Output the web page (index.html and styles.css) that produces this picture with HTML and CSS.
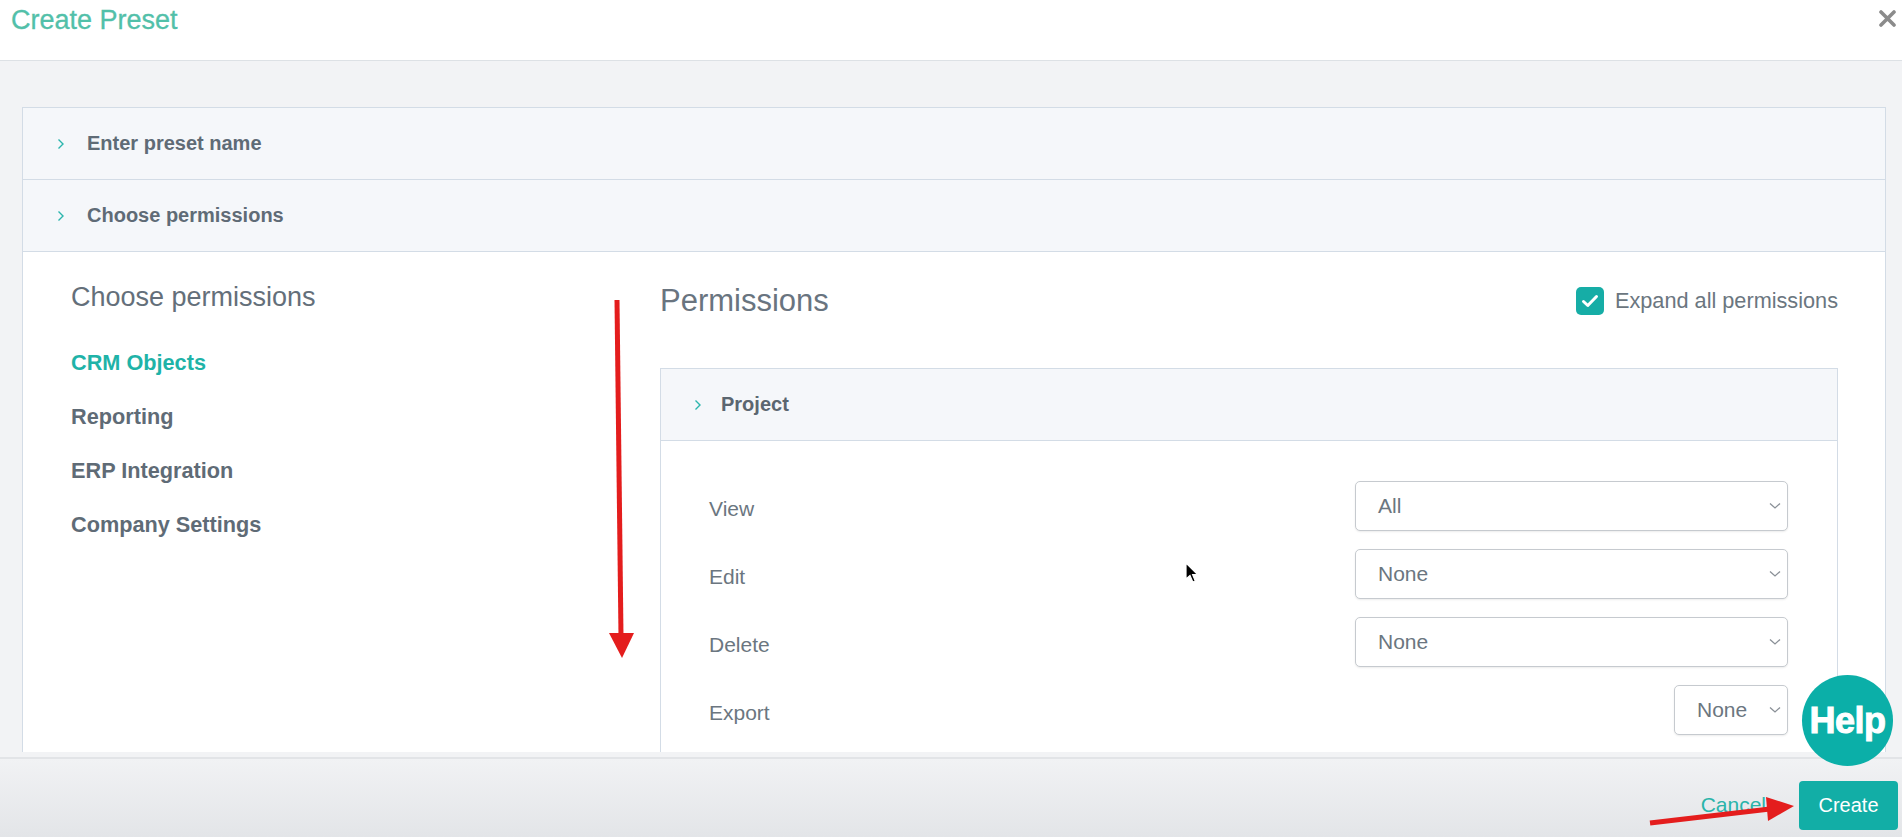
FILE: index.html
```html
<!DOCTYPE html>
<html>
<head>
  <title>Create Preset</title>
  <link rel="stylesheet" href="styles.css">
</head>
<body>
  <div class="modal">
    <header class="modal-header">
      <h1 class="modal-title">Create Preset</h1>
      <button class="close-btn" aria-label="Close">
        <svg width="17" height="17" viewBox="0 0 17 17"><path d="M2 2L15 15M15 2L2 15" stroke="#8b8b8b" stroke-width="3.6" stroke-linecap="round"/></svg>
      </button>
    </header>

    <main class="modal-body">
      <div class="scroll-area">
        <div class="wizard-card">
          <div class="step-header">
            <svg class="chev" width="8" height="12" viewBox="0 0 8 12"><path d="M1.5 1.5L6 6L1.5 10.5" fill="none" stroke="#2bb5ad" stroke-width="1.4"/></svg>
            <span>Enter preset name</span>
          </div>
          <div class="step-header">
            <svg class="chev" width="8" height="12" viewBox="0 0 8 12"><path d="M1.5 1.5L6 6L1.5 10.5" fill="none" stroke="#2bb5ad" stroke-width="1.4"/></svg>
            <span>Choose permissions</span>
          </div>

          <div class="perm-layout">
            <aside class="perm-nav">
              <h3>Choose permissions</h3>
              <ul>
                <li class="active">CRM Objects</li>
                <li>Reporting</li>
                <li>ERP Integration</li>
                <li>Company Settings</li>
              </ul>
            </aside>

            <section class="perm-main">
              <div class="perm-top">
                <h2>Permissions</h2>
                <label class="expand-all">
                  <span class="checkbox">
                    <svg width="18" height="14" viewBox="0 0 18 14"><path d="M2.5 7.5L6.8 11.5L15.5 2.5" fill="none" stroke="#fff" stroke-width="3" stroke-linecap="round" stroke-linejoin="round"/></svg>
                  </span>
                  Expand all permissions
                </label>
              </div>

              <div class="perm-panel">
                <div class="panel-header">
                  <svg class="chev" width="8" height="12" viewBox="0 0 8 12"><path d="M1.5 1.5L6 6L1.5 10.5" fill="none" stroke="#2bb5ad" stroke-width="1.4"/></svg>
                  <span>Project</span>
                </div>
                <div class="panel-body">
                  <div class="perm-row">
                    <span class="perm-label">View</span>
                    <div class="fake-select">All<svg width="12" height="8" viewBox="0 0 12 8"><path d="M1 1.5L6 6L11 1.5" fill="none" stroke="#8a9097" stroke-width="1.3"/></svg></div>
                  </div>
                  <div class="perm-row">
                    <span class="perm-label">Edit</span>
                    <div class="fake-select">None<svg width="12" height="8" viewBox="0 0 12 8"><path d="M1 1.5L6 6L11 1.5" fill="none" stroke="#8a9097" stroke-width="1.3"/></svg></div>
                  </div>
                  <div class="perm-row">
                    <span class="perm-label">Delete</span>
                    <div class="fake-select">None<svg width="12" height="8" viewBox="0 0 12 8"><path d="M1 1.5L6 6L11 1.5" fill="none" stroke="#8a9097" stroke-width="1.3"/></svg></div>
                  </div>
                  <div class="perm-row">
                    <span class="perm-label">Export</span>
                    <div class="fake-select small">None<svg width="12" height="8" viewBox="0 0 12 8"><path d="M1 1.5L6 6L11 1.5" fill="none" stroke="#8a9097" stroke-width="1.3"/></svg></div>
                  </div>
                </div>
              </div>
            </section>
          </div>
        </div>
      </div>
    </main>

    <footer class="modal-footer">
      <a class="cancel-link">Cancel</a>
      <button class="create-btn">Create</button>
    </footer>
  </div>

  <div class="help-bubble">Help</div>

  <!-- annotation arrows drawn over the screenshot -->
  <svg class="annotations" width="1902" height="837" viewBox="0 0 1902 837">
    <line x1="617" y1="300" x2="621" y2="636" stroke="#e41d1d" stroke-width="5"/>
    <polygon points="609,633 634,633 622,658" fill="#e41d1d"/>
    <line x1="1650" y1="823" x2="1770" y2="809" stroke="#e41d1d" stroke-width="5"/>
    <polygon points="1768,821 1766,797 1794,806" fill="#e41d1d"/>
  </svg>

  <svg class="cursor" width="14" height="22" viewBox="0 0 14 22">
    <path d="M1 1L1 17L5 13.5L7.8 20L10.3 19L7.6 12.6L12.6 12.6Z" fill="#000" stroke="#fff" stroke-width="1.2"/>
  </svg>
</body>
</html>
```

FILE: styles.css
```css
body {
  margin: 0;
  width: 1902px;
  height: 837px;
  overflow: hidden;
  font-family: 'Liberation Sans', Arial, sans-serif;
  color: #6b7680;
  background: #f2f3f5;
  position: relative;
}

.modal {
  display: flex;
  flex-direction: column;
  height: 837px;
}

/* Header */
.modal-header {
  height: 60px;
  background: #fff;
  border-bottom: 1px solid #dde1e5;
  display: flex;
  justify-content: space-between;
  align-items: flex-start;
}

.modal-title {
  margin: 0;
  padding: 2px 0 0 11px;
  font-size: 27px;
  font-weight: normal;
  line-height: 36px;
  color: #52c0a9;
  -webkit-text-stroke: 0.3px #52c0a9;
}

.close-btn {
  border: none;
  background: none;
  padding: 0;
  margin: 10px 6px 0 0;
  width: 17px;
  height: 17px;
  cursor: pointer;
}

/* Body */
.modal-body {
  height: 696px;
  box-sizing: border-box;
  padding: 46px 16px 0 22px;
}

.scroll-area {
  height: 645px;
  overflow: hidden;
}

.wizard-card {
  background: #fff;
  border: 1px solid #d3dce6;
  min-height: 700px;
}

.step-header {
  height: 71px;
  display: flex;
  align-items: center;
  background: #f5f7fa;
  border-bottom: 1px solid #d3dce6;
  padding-left: 34px;
  font-size: 20px;
  font-weight: bold;
  color: #5f6b76;
}

.chev {
  margin-right: 22px;
}

.perm-layout {
  display: flex;
  padding: 28px 47px 0 48px;
}

.perm-nav {
  flex: 0 0 589px;
}

.perm-nav h3 {
  margin: 0;
  font-size: 27px;
  font-weight: normal;
  line-height: 34px;
  color: #646f7a;
}

.perm-nav ul {
  list-style: none;
  margin: 22px 0 0;
  padding: 0;
}

.perm-nav li {
  line-height: 54px;
  font-size: 21.7px;
  font-weight: bold;
  color: #5f6b76;
}

.perm-nav li.active {
  color: #1fb3a8;
}

.perm-main {
  flex: 1;
}

.perm-top {
  display: flex;
  justify-content: space-between;
  align-items: center;
  height: 42px;
  margin-bottom: 46px;
}

.perm-top h2 {
  margin: 0;
  font-size: 31px;
  font-weight: normal;
  color: #69747f;
}

.expand-all {
  display: flex;
  align-items: center;
  font-size: 21.7px;
  color: #6b7680;
}

.checkbox {
  width: 28px;
  height: 28px;
  border-radius: 5px;
  background: #16ada6;
  display: flex;
  align-items: center;
  justify-content: center;
  margin-right: 11px;
}

/* Project panel */
.perm-panel {
  border: 1px solid #d3dce6;
}

.panel-header {
  height: 71px;
  display: flex;
  align-items: center;
  padding-left: 33px;
  background: #f5f7fa;
  border-bottom: 1px solid #d3dce6;
  font-size: 20px;
  font-weight: bold;
  color: #5b6670;
}

.panel-header .chev {
  margin-right: 19px;
}

.panel-body {
  padding: 40px 49px 20px 48px;
}

.perm-row {
  display: flex;
  justify-content: space-between;
  align-items: center;
  height: 50px;
  margin-bottom: 18px;
}

.perm-label {
  font-size: 21px;
  padding-top: 5px;
  color: #6b7680;
}

.fake-select {
  width: 433px;
  height: 50px;
  box-sizing: border-box;
  border: 1px solid #c6cacf;
  border-radius: 5px;
  box-shadow: 0 1px 2px rgba(0, 0, 0, 0.08);
  display: flex;
  align-items: center;
  justify-content: space-between;
  padding: 0 6px 0 22px;
  font-size: 21px;
  color: #6b7680;
  background: #fff;
}

.fake-select.small {
  width: 114px;
}

/* Footer */
.modal-footer {
  height: 80px;
  box-sizing: border-box;
  border-top: 2px solid #e2e4e7;
  background: linear-gradient(#f1f2f4, #e3e5e8);
  display: flex;
  justify-content: flex-end;
  align-items: flex-start;
  padding: 22px 4px 0 0;
}

.cancel-link {
  font-size: 21px;
  color: #2ab4aa;
  margin: 12px 33px 0 0;
  cursor: pointer;
}

.create-btn {
  width: 99px;
  height: 49px;
  border: none;
  border-radius: 4px;
  background: #12aea6;
  color: #fff;
  font-family: 'Liberation Sans', Arial, sans-serif;
  font-size: 20px;
  cursor: pointer;
}

/* Overlays */
.help-bubble {
  position: absolute;
  left: 1802px;
  top: 675px;
  width: 91px;
  height: 91px;
  border-radius: 50%;
  background: #0bafa8;
  color: #fff;
  font-size: 36px;
  font-weight: bold;
  letter-spacing: -0.5px;
  -webkit-text-stroke: 1px #fff;
  display: flex;
  align-items: center;
  justify-content: center;
}

.annotations {
  position: absolute;
  left: 0;
  top: 0;
  pointer-events: none;
}

.cursor {
  position: absolute;
  left: 1185px;
  top: 562px;
}
```
